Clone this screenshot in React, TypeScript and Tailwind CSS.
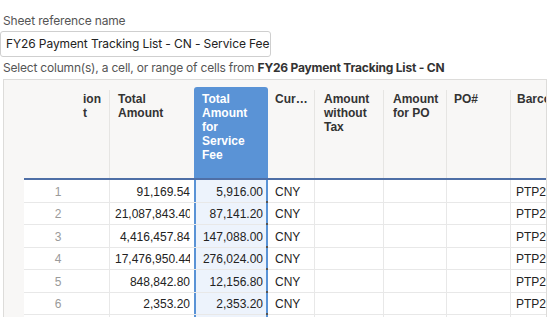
import React from 'react';

type Col = {
  w: string;
  head: React.ReactNode;
  headPad: string;
  bodyPad: string;
  align: 'left' | 'right' | 'num';
  divider: boolean;
  selected?: boolean;
};

const cols: Col[] = [
  { w: 'w-[86px]', head: <>ion<br />t</>, headPad: 'pl-[59px]', bodyPad: 'pl-0', align: 'num', divider: true },
  { w: 'w-[84px]', head: <>Total Amount</>, headPad: 'pl-[8px] pr-[4px]', bodyPad: 'pl-[5px] pr-[4px]', align: 'right', divider: false },
  { w: 'w-[74px]', head: <>Total Amount for Service Fee</>, headPad: 'pl-[8px] pr-[8px]', bodyPad: 'pl-[4px] pr-[3px]', align: 'right', divider: false, selected: true },
  { w: 'w-[47px]', head: <span className="block truncate">Currency</span>, headPad: 'pl-[7px] pr-[6px]', bodyPad: 'pl-[7px]', align: 'left', divider: true },
  { w: 'w-[69px]', head: <>Amount without Tax</>, headPad: 'pl-[9px] pr-[6px]', bodyPad: 'pl-[7px]', align: 'left', divider: true },
  { w: 'w-[63px]', head: <>Amount for PO</>, headPad: 'pl-[9px] pr-[4px]', bodyPad: 'pl-[7px]', align: 'left', divider: true },
  { w: 'w-[64px]', head: <>PO#</>, headPad: 'pl-[7px] pr-[4px]', bodyPad: 'pl-[7px]', align: 'left', divider: true },
  { w: 'w-[80px]', head: <span className="whitespace-nowrap">Barcode</span>, headPad: 'pl-[6px] pr-[4px]', bodyPad: 'pl-[5px]', align: 'left', divider: true },
];

const rows: string[][] = [
  ['1', '91,169.54', '5,916.00', 'CNY', '', '', '', 'PTP2025'],
  ['2', '21,087,843.40', '87,141.20', 'CNY', '', '', '', 'PTP2025'],
  ['3', '4,416,457.84', '147,088.00', 'CNY', '', '', '', 'PTP2025'],
  ['4', '17,476,950.44', '276,024.00', 'CNY', '', '', '', 'PTP2025'],
  ['5', '848,842.80', '12,156.80', 'CNY', '', '', '', 'PTP2025'],
  ['6', '2,353.20', '2,353.20', 'CNY', '', '', '', 'PTP2025'],
  ['7', '', '', '', '', '', '', ''],
];

function HeaderCell({ col }: { col: Col }) {
  if (col.selected) {
    return (
      <div className={`${col.w} shrink-0 bg-[#5a93d6] rounded-t-[3px] pt-[5px] ${col.headPad} text-white font-bold leading-[14px]`}>
        {col.head}
      </div>
    );
  }
  return (
    <div
      className={`${col.w} shrink-0 mt-[3px] pt-[2px] ${col.headPad} ${col.divider ? 'border-r border-[#e6e5e3]' : ''} text-[#333] font-bold leading-[14px]`}
    >
      {col.head}
    </div>
  );
}

function BodyCell({ col, value }: { col: Col; value: string }) {
  const base = `${col.w} shrink-0 h-full flex items-center pt-[2px] ${col.bodyPad}`;
  if (col.selected) {
    return (
      <div className={`${base} relative bg-[#edf3fc] border-x-2 border-[#5a93d6]`}>
        <div className="w-full overflow-hidden whitespace-nowrap text-right text-[#222]">{value}</div>
        <span className="absolute -right-[2px] -bottom-[2px] w-[2px] h-[3px] bg-[#555]" />
      </div>
    );
  }
  if (col.align === 'num') {
    return (
      <div className={`${base} ${col.divider ? 'border-r border-[#e8e8e8]' : ''}`}>
        <div className="w-[68px] text-center text-[#9a9a9a]">{value}</div>
      </div>
    );
  }
  return (
    <div className={`${base} ${col.divider ? 'border-r border-[#e8e8e8]' : ''}`}>
      <div className={`w-full overflow-hidden whitespace-nowrap text-[#222] ${col.align === 'right' ? 'text-right' : 'text-left'}`}>
        {value}
      </div>
    </div>
  );
}

export default function App() {
  return (
    <div className="w-[553px] h-[317px] overflow-hidden bg-white font-['Inter',sans-serif]">
      {/* Sheet name */}
      <div className="pt-[13px] pl-[3px] text-[12px] leading-[16px] tracking-[-0.15px] text-[#555]">Sheet reference name</div>
      <div className="mt-[2px] w-[271px] h-[26px] border border-[#cfcfcf] rounded-[3px] flex items-center pl-[5px] text-[12px] tracking-[-0.1px] text-[#222] whitespace-nowrap overflow-hidden">
        FY26 Payment Tracking List - CN - Service Fee
      </div>
      <div className="mt-[3px] pl-[3px] text-[12px] leading-[16px] tracking-[-0.2px] text-[#555] whitespace-nowrap">
        Select column(s), a cell, or range of cells from{' '}
        <span className="font-bold text-[#333]">FY26 Payment Tracking List - CN</span>
      </div>

      {/* Grid panel */}
      <div className="mt-[3px] ml-[3px] w-[544px] h-[240px] flex border-t border-x border-[#dddcda] bg-[#f8f7f6] overflow-hidden font-['Liberation_Sans',Arial,sans-serif] text-[12px]">
        <div className="w-[20px] shrink-0" />
        <div className="flex-1 min-w-0 overflow-hidden">
          <div className="h-[98px] pt-[7px] flex items-stretch">
            {cols.map((c, i) => (
              <HeaderCell key={i} col={c} />
            ))}
          </div>
          <div className="border-t-2 border-[#4f6fa6] bg-white">
            {rows.map((r, ri) => (
              <div key={ri} className="h-[22.5px] flex border-b border-[#e8e8e8]">
                {cols.map((c, ci) => (
                  <BodyCell key={ci} col={c} value={r[ci]} />
                ))}
              </div>
            ))}
          </div>
        </div>
      </div>
    </div>
  );
}
